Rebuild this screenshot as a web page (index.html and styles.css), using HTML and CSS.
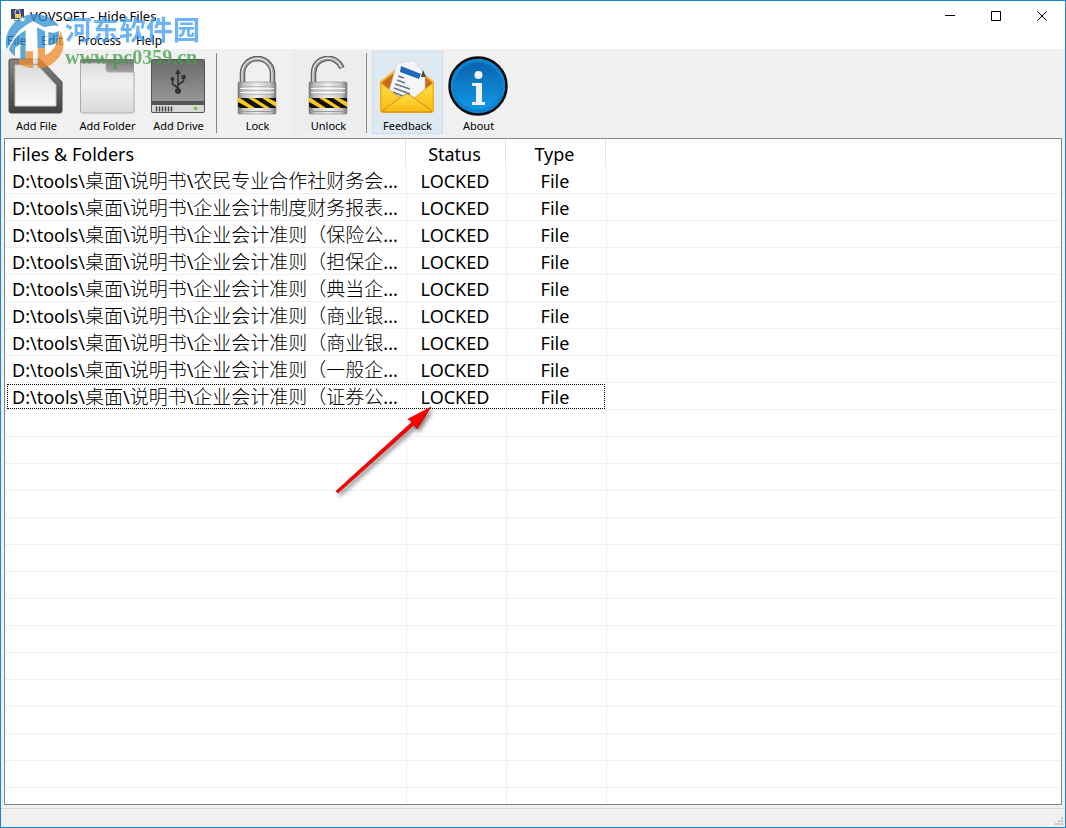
FILE: index.html
```html
<!DOCTYPE html>
<html lang="en">
<head>
  <meta charset="UTF-8">
  <title>VOVSOFT - Hide Files</title>
  <link rel="stylesheet" href="styles.css">
</head>
<body>
  <div class="window">
    <header class="titlebar">
      <svg class="app-icon" viewBox="0 0 14 14">
        <rect x="0" y="0" width="13" height="10" fill="#3d4757"/>
        <rect x="1" y="1" width="11" height="8" fill="#3a3f8c"/>
        <path d="M4 5V3a2 2 0 0 1 5 0v2" fill="none" stroke="#ddd" stroke-width="1"/>
        <rect x="4" y="5" width="6" height="4" fill="#f4d03a"/>
        <rect x="3" y="11" width="8" height="1" fill="#777"/>
      </svg>
      <h1>VOVSOFT - Hide Files</h1>
      <div class="window-buttons">
        <button type="button" aria-label="Minimize"><svg viewBox="0 0 11 11"><path d="M0 4.500h10"/></svg></button>
        <button type="button" aria-label="Maximize"><svg viewBox="0 0 11 11"><path d="M.5 .5h9v9h-9z"/></svg></button>
        <button type="button" aria-label="Close"><svg viewBox="0 0 11 11"><path d="M.5 .5l9 9M9.500 .5l-9 9"/></svg></button>
      </div>
    </header>

    <nav class="menu">
      <button type="button">File</button>
      <button type="button">Edit</button>
      <button type="button">Process</button>
      <button type="button">Help</button>
    </nav>

    <div class="toolbar">
      <button type="button" class="tool">
        <svg viewBox="0 0 61 61">
          <defs>
            <linearGradient id="dark" x1="0" y1="0" x2="0" y2="1"><stop offset="0" stop-color="#858585"/><stop offset="1" stop-color="#404040"/></linearGradient>
            <linearGradient id="paper" x1="0" y1="0" x2="0" y2="1"><stop offset="0" stop-color="#dcdcdc"/><stop offset="1" stop-color="#fbfbfb"/></linearGradient>
          </defs>
          <path d="M5 3h29l22 23v29q0 2-2 2H5q-2 0-2-2V5q0-2 2-2z" fill="url(#dark)" stroke="#4a4a4a"/>
          <path d="M9 9h22l19 20v21H9z" fill="url(#paper)" stroke="#c5c5c5"/>
        </svg>
        Add File
      </button>
      <button type="button" class="tool">
        <svg viewBox="0 0 61 61">
          <defs>
            <linearGradient id="tab" x1="0" y1="0" x2="0" y2="1"><stop offset="0" stop-color="#777"/><stop offset="1" stop-color="#a5a5a5"/></linearGradient>
            <linearGradient id="folder" x1="0" y1="0" x2="0" y2="1"><stop offset="0" stop-color="#dcdcdc"/><stop offset=".4" stop-color="#f0f0f0"/><stop offset="1" stop-color="#dadada"/></linearGradient>
          </defs>
          <path d="M5 3h50q2 0 2 2v12H3V5q0-2 2-2z" fill="url(#tab)"/>
          <path d="M3.500 8q0-1 1-1H28q1 0 1 1v5q0 3 3 3h25v39q0 2-2 2H5.500q-2 0-2-2z" fill="url(#folder)" stroke="#aaa"/>
        </svg>
        Add Folder
      </button>
      <button type="button" class="tool">
        <svg viewBox="0 0 61 61">
          <defs>
            <linearGradient id="drive" x1="0" y1="0" x2="0" y2="1"><stop offset="0" stop-color="#6a6a6a"/><stop offset="1" stop-color="#969696"/></linearGradient>
          </defs>
          <rect x="3" y="3" width="54" height="54" rx="2" fill="#555"/>
          <rect x="4" y="4" width="52" height="41" fill="url(#drive)"/>
          <path d="M4 49h52v6q0 1-1 1H5q-1 0-1-1z" fill="#d8d8d8"/>
          <path d="M8.500 50.500v5M11.500 50.500v5M14.500 50.500v5M17.500 50.500v5M20.500 50.500v5M23.500 50.500v5" stroke="#444" stroke-width="1.500"/>
          <circle cx="47.500" cy="52.500" r="1.800" fill="#7cc230"/>
          <path d="M30 35V17M30 32l-5.500-4v-5M30 29l5.500-4v-5" fill="none" stroke="#333" stroke-width="1.600"/>
          <path d="M27 18l3-5 3 5z" fill="#333"/>
          <circle cx="30" cy="35" r="3" fill="#333"/>
          <circle cx="24.500" cy="23" r="2" fill="#333"/>
          <rect x="33.500" y="19" width="4" height="4" fill="#333"/>
        </svg>
        Add Drive
      </button>

      <span class="separator"></span>

      <button type="button" class="tool">
        <svg viewBox="0 0 61 61">
          <defs>
            <linearGradient id="steel" x1="0" y1="0" x2="1" y2="0"><stop offset="0" stop-color="#777"/><stop offset=".15" stop-color="#c4c4c4"/><stop offset=".5" stop-color="#eee"/><stop offset=".85" stop-color="#c4c4c4"/><stop offset="1" stop-color="#777"/></linearGradient>
            <clipPath id="band"><rect x="11" y="42" width="38" height="10"/></clipPath>
            <g id="lock-body">
              <rect x="11" y="26" width="38" height="32" rx="1" fill="url(#steel)" stroke="#858585" stroke-width=".6"/>
              <path d="M13 30.500h34M13 34.500h34M13 38.500h34" stroke="#b4b4b4" stroke-width=".8"/>
              <path d="M13 32.500h34M13 36.500h34" stroke="#f6f6f6"/>
              <g clip-path="url(#band)">
                <rect x="11" y="42" width="38" height="10" fill="#fcc81c"/>
                <path d="M11 46l11 6h-9l-2-1zM13 42h8l16 10h-9zM27 42h8l14 9v1h-6zM41 42h8v4z" fill="#111"/>
              </g>
              <path d="M12 55.500h36" stroke="#999" stroke-width="1"/>
            </g>
          </defs>
          <path d="M15.500 27V17.500a14.500 14.500 0 0 1 30 0V27" fill="none" stroke="#555" stroke-width="5.500"/>
          <path d="M15.500 27V17.500a14.500 14.500 0 0 1 30 0V27" fill="none" stroke="#999" stroke-width="3.500"/>
          <path d="M15 27V17.500a14.500 14.500 0 0 1 30 0V27" fill="none" stroke="#e6e6e6" stroke-width="1.300"/>
          <use href="#lock-body"/>
        </svg>
        Lock
      </button>
      <button type="button" class="tool tool-soft">
        <svg viewBox="0 0 61 61">
          <path d="M15.500 27V17C16 0 38-3 44 12" fill="none" stroke="#555" stroke-width="5.500"/>
          <path d="M15.500 27V17C16 0 38-3 44 12" fill="none" stroke="#999" stroke-width="3.500"/>
          <path d="M15 27V17C15.500 0 37-3 43 11" fill="none" stroke="#e6e6e6" stroke-width="1.300"/>
          <use href="#lock-body"/>
        </svg>
        Unlock
      </button>

      <span class="separator"></span>

      <button type="button" class="tool tool-hot">
        <svg viewBox="0 0 61 61">
          <defs>
            <linearGradient id="mail" x1="0" y1="0" x2="0" y2="1"><stop offset="0" stop-color="#ffdf45"/><stop offset="1" stop-color="#fab810"/></linearGradient>
          </defs>
          <path d="M4 26l14-11h24l14 11v28q0 2-2 2H6q-2 0-2-2z" fill="#c96d1b" stroke="#f6b22a" stroke-width="2" stroke-linejoin="round"/>
          <path d="M20 8l17-4 11 15v20l-18 6-18-10z" fill="#f3f5f8" stroke="#c8ced6" stroke-width=".6"/>
          <path d="M44 21l2-7 3 7z" fill="#444"/>
          <path d="M24 10l20 8-2 5-19-7z" fill="#1f68b5"/>
          <path d="M21 20l6 2M20 24l8 3M18 28l15 5M17 32l16 6M16 36l12 5" stroke="#66778c" stroke-width="1.500"/>
          <path d="M4 27l20 16L6 56q-2 0-2-2zM56 27L36 43l18 13q2 0 2-2z" fill="url(#mail)" stroke="#f1a512" stroke-width=".8"/>
          <path d="M5 55l22-16q3-2 6 0l22 16q-1 1-2 1H7z" fill="url(#mail)" stroke="#b98222" stroke-width=".8"/>
        </svg>
        Feedback
      </button>
      <button type="button" class="tool">
        <svg viewBox="0 0 61 61">
          <defs>
            <linearGradient id="info" x1="0" y1="0" x2="0" y2="1"><stop offset="0" stop-color="#0a62ae"/><stop offset="1" stop-color="#109be6"/></linearGradient>
          </defs>
          <circle cx="30" cy="30" r="28.500" fill="#0b85d4" stroke="#0a0a0a" stroke-width="2.500"/>
          <circle cx="30" cy="30" r="24" fill="url(#info)" stroke="#0f7cc8"/>
          <circle cx="30.500" cy="19" r="4" fill="#f0f0f0"/>
          <path d="M24 27h10v19h3v3H24v-3h4V30h-4z" fill="#f0f0f0"/>
        </svg>
        About
      </button>
    </div>

    <main class="list">
      <table>
        <colgroup><col class="col-path"><col class="col-small"><col class="col-small"></colgroup>
        <thead>
          <tr><th>Files &amp; Folders</th><th>Status</th><th>Type</th></tr>
        </thead>
        <tbody>
          <tr><td>D:\tools\<span lang="zh">桌面</span>\<span lang="zh">说明书</span>\<span lang="zh">农民专业合作社财务会</span>...</td><td>LOCKED</td><td>File</td></tr>
          <tr><td>D:\tools\<span lang="zh">桌面</span>\<span lang="zh">说明书</span>\<span lang="zh">企业会计制度财务报表</span>...</td><td>LOCKED</td><td>File</td></tr>
          <tr><td>D:\tools\<span lang="zh">桌面</span>\<span lang="zh">说明书</span>\<span lang="zh">企业会计准则（保险公</span>...</td><td>LOCKED</td><td>File</td></tr>
          <tr><td>D:\tools\<span lang="zh">桌面</span>\<span lang="zh">说明书</span>\<span lang="zh">企业会计准则（担保企</span>...</td><td>LOCKED</td><td>File</td></tr>
          <tr><td>D:\tools\<span lang="zh">桌面</span>\<span lang="zh">说明书</span>\<span lang="zh">企业会计准则（典当企</span>...</td><td>LOCKED</td><td>File</td></tr>
          <tr><td>D:\tools\<span lang="zh">桌面</span>\<span lang="zh">说明书</span>\<span lang="zh">企业会计准则（商业银</span>...</td><td>LOCKED</td><td>File</td></tr>
          <tr><td>D:\tools\<span lang="zh">桌面</span>\<span lang="zh">说明书</span>\<span lang="zh">企业会计准则（商业银</span>...</td><td>LOCKED</td><td>File</td></tr>
          <tr><td>D:\tools\<span lang="zh">桌面</span>\<span lang="zh">说明书</span>\<span lang="zh">企业会计准则（一般企</span>...</td><td>LOCKED</td><td>File</td></tr>
          <tr class="focused"><td>D:\tools\<span lang="zh">桌面</span>\<span lang="zh">说明书</span>\<span lang="zh">企业会计准则（证券公</span>...</td><td>LOCKED</td><td>File</td></tr>
        </tbody>
      </table>
    </main>

    <footer class="statusbar">
      <svg viewBox="0 0 8 8"><path d="M6 0h2v2H6zM3 3h2v2H3zM6 3h2v2H6zM0 6h2v2H0zM3 6h2v2H3zM6 6h2v2H6z" fill="#bfbfbf"/></svg>
    </footer>

    <!-- pointer to the last locked row -->
    <svg class="arrow" viewBox="0 0 104 98">
      <path d="M5 90L81 21l-4-3 23-12-14 22-3-4L7 92z" fill="#f00" stroke="#b00000" stroke-width=".6"/>
    </svg>

    <!-- site watermark -->
    <div class="watermark">
      <svg viewBox="0 0 180 168">
        <circle cx="88" cy="84" r="72" fill="#fff"/>
        <path d="M4 112C-8 50 45-4 108 8q34 6 54 34-20-4-44 4L84 28Q40 48 20 88 10 104 4 112z" fill="#2b8fd0"/>
        <path d="M12 112q12-36 50-58v88H46V96l-16 12v24q-12-6-18-20z" fill="#2b8fd0"/>
        <path d="M96 46l24 12v50H98zM130 60q20 6 32-4 2 20-8 38l-24 6z" fill="#2b8fd0"/>
        <path d="M46 142h16v-24h22v50q-26 0-44-16zM98 108h22v22q36-16 46-74 22 44-4 80-26 34-64 32z" fill="#f08a28"/>
        <path d="M52 12l3 6 6 1-4 4 1 6-6-3-6 3 1-6-4-4 6-1z" fill="#fff"/>
      </svg>
      <div>
        <p class="site-name" lang="zh">河东软件园</p>
        <p class="site-url">www.pc0359.cn</p>
      </div>
    </div>
  </div>
</body>
</html>
```
FILE: styles.css
```css
* {
  box-sizing: border-box;
}
body {
  margin: 0;
  font-family: "Noto Sans", "Noto Sans CJK SC", sans-serif;
  color: #000;
}
button {
  padding: 0;
  border: none;
  background: none;
  font: inherit;
  color: inherit;
}
.window {
  position: relative;
  display: flex;
  flex-direction: column;
  min-height: 100vh;
  border: 1px solid #1883d7;
  background: #f0f0f0;
}

/* title and menu */
.titlebar {
  display: flex;
  align-items: center;
  height: 30px;
  padding-left: 10px;
  background: #fff;
}
.app-icon {
  width: 14px;
  height: 14px;
}
.titlebar h1 {
  flex: 1;
  margin: 0 0 0 5px;
  font-size: 13px;
  font-weight: 400;
  line-height: 16px;
}
.window-buttons {
  display: flex;
}
.window-buttons button {
  width: 46px;
  height: 28px;
}
.window-buttons svg {
  display: block;
  width: 11px;
  height: 11px;
  margin: auto;
  fill: none;
  stroke: #000;
}
.menu {
  display: flex;
  gap: 15px;
  height: 18px;
  padding-left: 6px;
  background: #fff;
  font-size: 12px;
  line-height: 20px;
}

/* toolbar */
.toolbar {
  display: flex;
  height: 89px;
  padding-top: 2px;
}
.tool {
  display: flex;
  flex-direction: column;
  align-items: center;
  width: 71px;
  height: 83px;
  padding-top: 4px;
  border: 1px solid transparent;
  font-size: 11px;
  line-height: 18px;
}
.tool svg {
  flex: none;
  width: 61px;
  height: 61px;
}
.tool-soft {
  border-color: #e8edf2;
  background: #ecedef;
}
.tool-hot {
  border-color: #c6dff3;
  background: #dfe9f2;
}
.separator {
  width: 1px;
  height: 80px;
  margin: 2px 5px 0 2px;
  background: #868686;
}

/* file list, grid lines run on below the last row */
.list {
  flex: 1;
  margin: 0 3px;
  padding-left: 1px;
  border: 1px solid #828790;
  background:
    linear-gradient(#fff, #fff) 0 0 / 100% 28px no-repeat,
    linear-gradient(#f0f0f0, #f0f0f0) 401px 0 / 1px 100% no-repeat,
    linear-gradient(#f0f0f0, #f0f0f0) 501px 0 / 1px 100% no-repeat,
    linear-gradient(#f0f0f0, #f0f0f0) 601px 0 / 1px 100% no-repeat,
    linear-gradient(transparent 26px, #f0f0f0 26px) 0 1px / 100% 27px,
    #fff;
}
.list table {
  width: 600px;
  table-layout: fixed;
  border-collapse: separate;
  border-spacing: 0;
  font-size: 18px;
  line-height: 26px;
}
.col-path {
  width: 400px;
}
.col-small {
  width: 100px;
}
.list th,
.list td {
  height: 27px;
  padding: 0 2px 0 0;
  overflow: hidden;
  font-weight: 400;
  text-align: center;
  white-space: nowrap;
}
.list th {
  height: 28px;
  padding-top: 2px;
  border-right: 1px solid #e5e5e5;
}
.list th:first-child,
.list td:first-child {
  padding-left: 6px;
  padding-right: 0;
  text-align: left;
}
.list td span {
  font-family: "Noto Sans CJK SC", sans-serif;
  font-size: 19px;
  font-weight: 300;
  line-height: 20px;
}
.focused {
  outline: 1px dotted #000;
  outline-offset: -2px;
}

.statusbar {
  display: flex;
  justify-content: flex-end;
  align-items: flex-end;
  height: 19px;
  margin-top: 3px;
  padding: 2px;
  border-top: 1px solid #d7d7d7;
}
.statusbar svg {
  width: 8px;
  height: 8px;
}

.arrow {
  position: absolute;
  left: 330px;
  top: 400px;
  width: 104px;
  height: 98px;
  filter: drop-shadow(2px 3px 2px rgba(0, 0, 0, 0.5));
  pointer-events: none;
}
.watermark {
  position: absolute;
  left: 4px;
  top: 11px;
  display: flex;
  opacity: 0.75;
  pointer-events: none;
}
.watermark svg {
  width: 60px;
  height: 56px;
}
.watermark p {
  margin: 0;
}
.site-name {
  font-family: "Noto Sans CJK SC", sans-serif;
  font-size: 27px;
  font-weight: 700;
  line-height: 34px;
  color: #3b9cf2;
}
.site-url {
  font-family: "Liberation Serif", serif;
  font-size: 20px;
  font-weight: 700;
  line-height: 22px;
  color: #43a047;
}
```
